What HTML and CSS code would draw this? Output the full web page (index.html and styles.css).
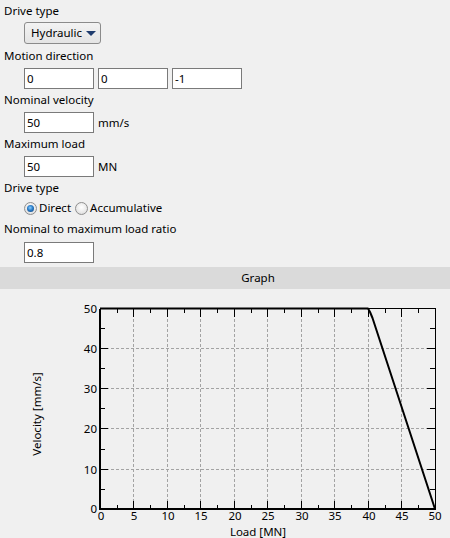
FILE: index.html
```html
<!DOCTYPE html>
<html>
<head>
<meta charset="utf-8">
<link rel="stylesheet" href="styles.css">
</head>
<body>
<div class="form">
  <div class="label first">Drive type</div>
  <div class="row combo-row">
    <div class="combo"><span>Hydraulic</span><span class="arrow"></span></div>
  </div>
  <div class="label">Motion direction</div>
  <div class="row">
    <div class="field">0</div>
    <div class="field">0</div>
    <div class="field">-1</div>
  </div>
  <div class="label tight">Nominal velocity</div>
  <div class="row">
    <div class="field">50</div>
    <span class="unit">mm/s</span>
  </div>
  <div class="label tight">Maximum load</div>
  <div class="row">
    <div class="field">50</div>
    <span class="unit">MN</span>
  </div>
  <div class="label tight">Drive type</div>
  <div class="row radio-row">
    <span class="radio checked"></span><span class="rlabel">Direct</span>
    <span class="radio"></span><span class="rlabel">Accumulative</span>
  </div>
  <div class="label ratio">Nominal to maximum load ratio</div>
  <div class="row ratio-row">
    <div class="field">0.8</div>
  </div>
</div>
<div class="header">Graph</div>
<div class="graph">
<svg class="chart" width="450" height="249" viewBox="0 289 450 249" xmlns="http://www.w3.org/2000/svg">
  <g class="grid" stroke="#a3a3a3" stroke-width="1" stroke-dasharray="3 2" shape-rendering="crispEdges">
    <line x1="133.5" y1="309" x2="133.5" y2="509"/>
    <line x1="167.5" y1="309" x2="167.5" y2="509"/>
    <line x1="200.5" y1="309" x2="200.5" y2="509"/>
    <line x1="234.5" y1="309" x2="234.5" y2="509"/>
    <line x1="267.5" y1="309" x2="267.5" y2="509"/>
    <line x1="301.5" y1="309" x2="301.5" y2="509"/>
    <line x1="334.5" y1="309" x2="334.5" y2="509"/>
    <line x1="368.5" y1="309" x2="368.5" y2="509"/>
    <line x1="401.5" y1="309" x2="401.5" y2="509"/>
    <line x1="101" y1="348.5" x2="435" y2="348.5"/>
    <line x1="101" y1="388.5" x2="435" y2="388.5"/>
    <line x1="101" y1="428.5" x2="435" y2="428.5"/>
    <line x1="101" y1="469.5" x2="435" y2="469.5"/>
  </g>
  <g stroke="#000" stroke-width="1" shape-rendering="crispEdges">
    <line x1="100" y1="308.5" x2="436" y2="308.5"/>
    <line x1="435.5" y1="308" x2="435.5" y2="510"/>
    <line x1="100" y1="309" x2="100" y2="510" stroke-width="2"/>
    <line x1="99" y1="509" x2="436" y2="509" stroke-width="2"/>
    <path d="M133.5 509v-8M167.5 509v-8M200.5 509v-8M234.5 509v-8M267.5 509v-8M301.5 509v-8M334.5 509v-8M368.5 509v-8M401.5 509v-8 M117.5 509v-4M150.5 509v-4M184.5 509v-4M217.5 509v-4M251.5 509v-4M284.5 509v-4M318.5 509v-4M351.5 509v-4M385.5 509v-4M418.5 509v-4"/>
    <path d="M133.5 309v8M167.5 309v8M200.5 309v8M234.5 309v8M267.5 309v8M301.5 309v8M334.5 309v8M368.5 309v8M401.5 309v8 M117.5 309v4M150.5 309v4M184.5 309v4M217.5 309v4M251.5 309v4M284.5 309v4M318.5 309v4M351.5 309v4M385.5 309v4M418.5 309v4"/>
    <path d="M101 348.5h7M101 388.5h7M101 428.5h7M101 469.5h7 M101 328.5h4M101 368.5h4M101 408.5h4M101 449.5h4M101 489.5h4"/>
    <path d="M435 348.5h-8M435 388.5h-8M435 428.5h-8M435 469.5h-8 M435 328.5h-5M435 368.5h-5M435 408.5h-5M435 449.5h-5M435 489.5h-5"/>
  </g>
  <polyline points="100,308.5 368,308.5 370,312 372.5,318 435,509" fill="none" stroke="#000" stroke-width="2" stroke-linejoin="round"/>
  <g class="ylab" text-anchor="end">
    <text x="97" y="312.5">50</text>
    <text x="97" y="352.5">40</text>
    <text x="97" y="392.5">30</text>
    <text x="97" y="432.5">20</text>
    <text x="97" y="473.5">10</text>
    <text x="97" y="513">0</text>
  </g>
  <g class="xlab" text-anchor="middle">
    <text x="101" y="520">0</text>
    <text x="134" y="520">5</text>
    <text x="168" y="520">10</text>
    <text x="201" y="520">15</text>
    <text x="235" y="520">20</text>
    <text x="268" y="520">25</text>
    <text x="302" y="520">30</text>
    <text x="335" y="520">35</text>
    <text x="369" y="520">40</text>
    <text x="402" y="520">45</text>
    <text x="435" y="520">50</text>
  </g>
  <text class="axis-title" x="258" y="536" text-anchor="middle">Load [MN]</text>
  <text class="axis-title" transform="translate(41 414) rotate(-90)" text-anchor="middle">Velocity [mm/s]</text>
</svg>
</div>
</body>
</html>
```

FILE: styles.css
```css
html, body {
  margin: 0;
  padding: 0;
  background: #f0f0f0;
}
body {
  width: 450px;
  height: 538px;
  overflow: hidden;
  font-family: "Noto Sans", "Open Sans", "DejaVu Sans", sans-serif;
  font-size: 11.5px;
  color: #000;
}
.form {
  padding-top: 3px;
  display: flex;
  flex-direction: column;
}
.label {
  height: 16px;
  line-height: 16px;
  padding-left: 4px;
  margin-top: 4px;
  white-space: nowrap;
}
.label.first { margin-top: 0; }
.label.tight { margin-top: 3px; }
.label.ratio { margin-top: 5px; }
.row {
  display: flex;
  align-items: center;
  padding-left: 24px;
  margin-top: 4px;
  gap: 4px;
}
.combo-row { margin-top: 3px; }
.combo {
  box-sizing: border-box;
  width: 77px;
  height: 22px;
  border: 1px solid #8b8b8b;
  border-radius: 3px;
  background: linear-gradient(#f3f3f3, #e4e4e4);
  display: flex;
  align-items: center;
  justify-content: space-between;
  padding: 0 4px 0 6px;
  line-height: 18px;
}
.arrow {
  width: 0;
  height: 0;
  border-left: 5px solid transparent;
  border-right: 5px solid transparent;
  border-top: 5px solid #1f3c6e;
  margin-top: 1px;
}
.field {
  box-sizing: border-box;
  width: 70px;
  height: 21px;
  border: 1px solid #7a7a7a;
  background: #fff;
  padding-left: 2px;
  line-height: 19px;
}
.unit {
  line-height: 16px;
}
.radio-row {
  height: 16px;
  gap: 0;
  margin-top: 4px;
}
.radio {
  box-sizing: border-box;
  width: 13px;
  height: 13px;
  border-radius: 50%;
  border: 1px solid #8f8f8f;
  background: radial-gradient(circle at 50% 40%, #ffffff 0%, #e8e8e8 60%, #d0d0d0 100%);
  display: flex;
  align-items: center;
  justify-content: center;
}
.radio.checked::after {
  content: "";
  width: 7px;
  height: 7px;
  border-radius: 50%;
  background: radial-gradient(circle at 45% 40%, #8ad0ff 0%, #2a7cc8 45%, #0d3a70 100%);
}
.rlabel {
  line-height: 16px;
  margin-left: 2px;
  margin-right: 4px;
}
.ratio-row { margin-top: 5px; }
.header {
  margin-top: 4px;
  height: 22px;
  line-height: 22px;
  background: #dadada;
  padding-left: 66px;
  text-align: center;
}
.graph {
  height: 249px;
}
.chart {
  display: block;
  font-family: "Noto Sans", "Open Sans", "DejaVu Sans", sans-serif;
  font-size: 11.5px;
}
.chart text {
  fill: #000;
}
```
